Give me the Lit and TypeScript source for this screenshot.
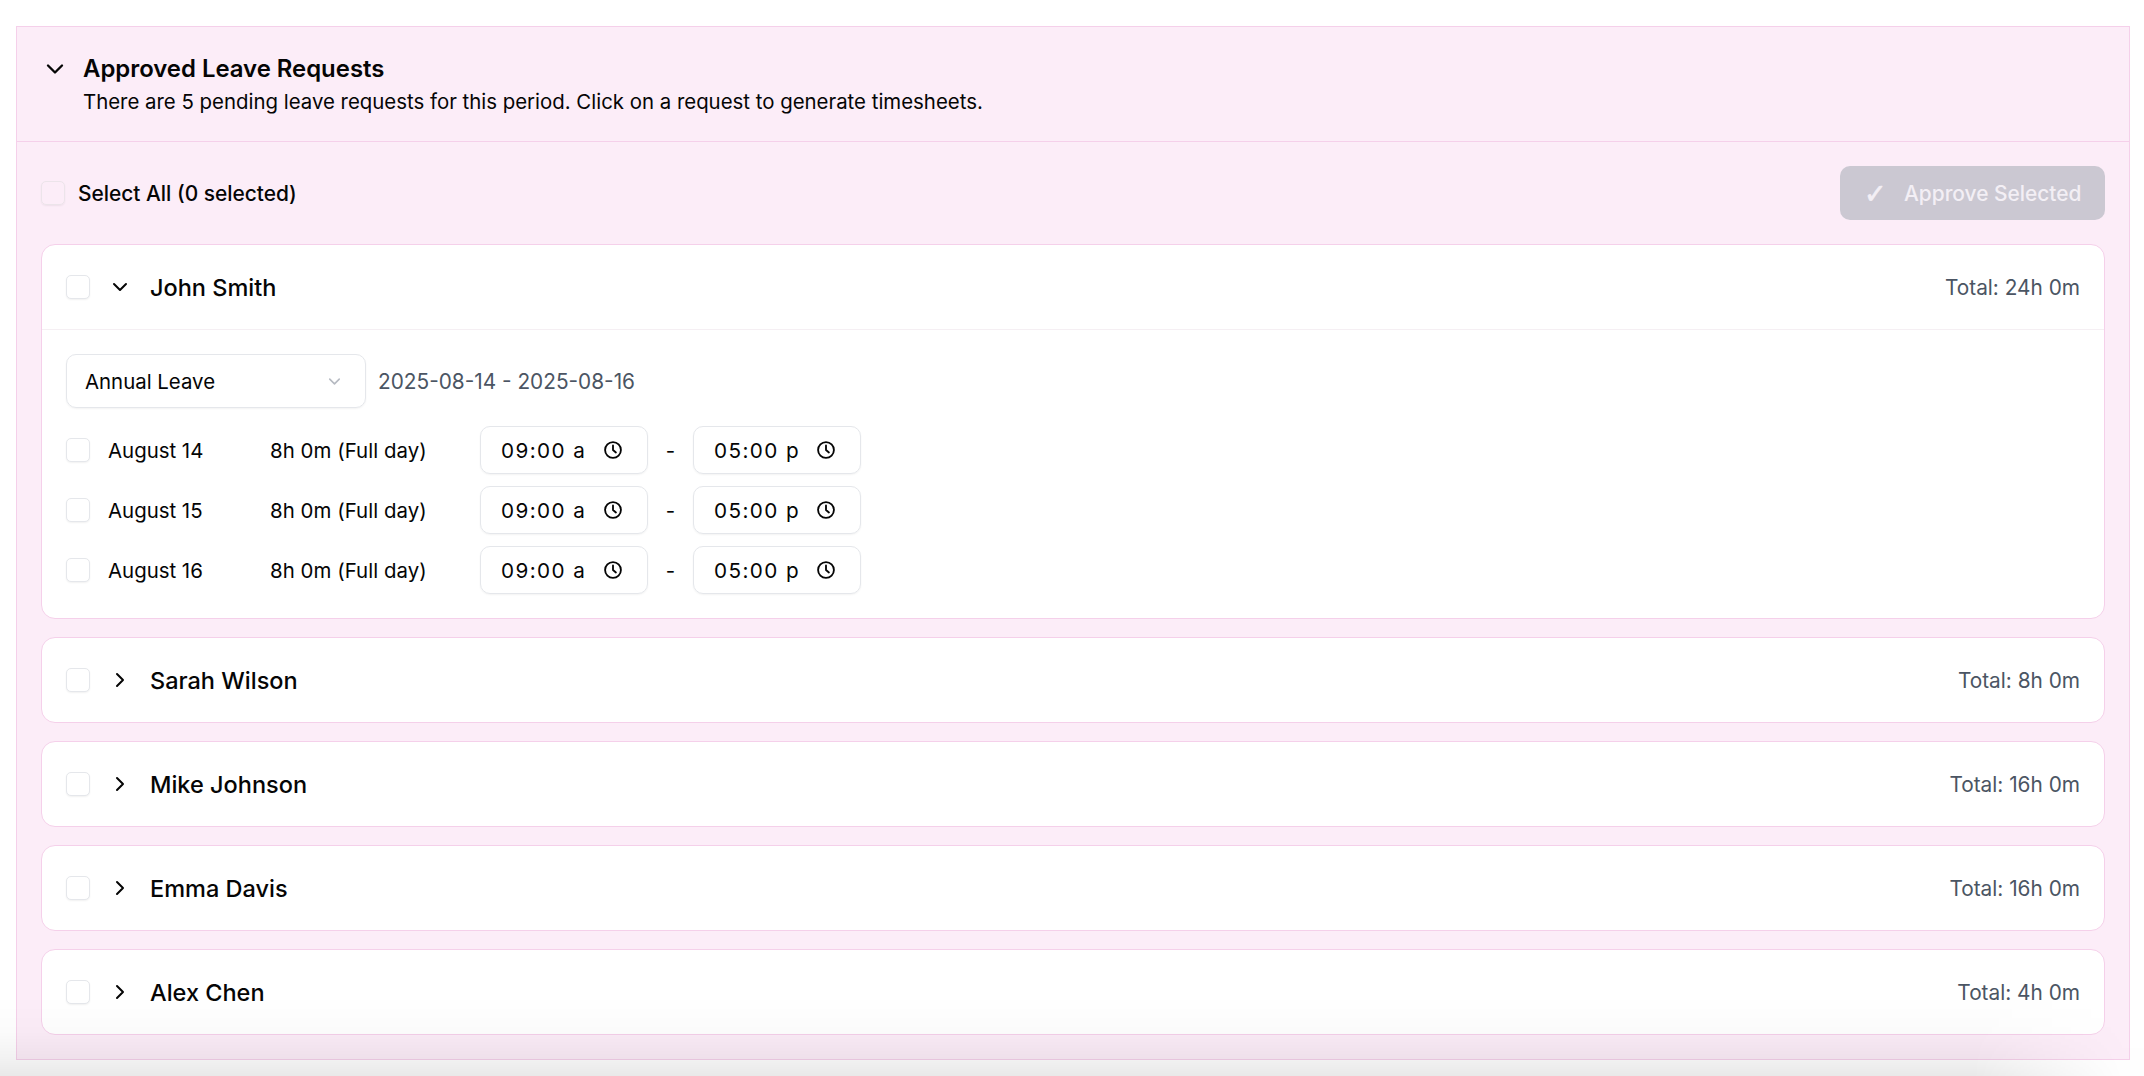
import { LitElement, html, css, svg } from "lit";
import { customElement } from "lit/decorators.js";

const chevronDown = (cls: string) => html`<svg class=${cls} viewBox="0 0 24 24" fill="none" stroke="currentColor" stroke-width="2" stroke-linecap="round" stroke-linejoin="round"><path d="m6 9 6 6 6-6"></path></svg>`;
const chevronRight = (cls: string) => html`<svg class=${cls} viewBox="0 0 24 24" fill="none" stroke="currentColor" stroke-width="2" stroke-linecap="round" stroke-linejoin="round"><path d="m9 18 6-6-6-6"></path></svg>`;
const clock = html`<svg class="clock" viewBox="0 0 24 24" fill="none" stroke="currentColor" stroke-width="2.2" stroke-linecap="round" stroke-linejoin="round">${svg`<circle cx="12" cy="12" r="9.5"></circle><path d="M12 6.5V12l3.5 3"></path>`}</svg>`;

const others = [
  { name: "Sarah Wilson", total: "8h 0m" },
  { name: "Mike Johnson", total: "16h 0m" },
  { name: "Emma Davis", total: "16h 0m" },
  { name: "Alex Chen", total: "4h 0m" },
];
const days = ["August 14", "August 15", "August 16"];

@customElement("app-root")
export class AppRoot extends LitElement {
  static styles = css`
    :host {
      display: block;
      position: relative;
      height: 1076px;
      overflow: hidden;
      background: #fff;
      font-family: Inter, "Liberation Sans", sans-serif;
      color: #050505;
      padding: 26px 14px 0 16px;
      box-sizing: border-box;
    }
    .panel {
      border: 1px solid #f5d0ea;
      background: #fcedf8;
      height: 1034px;
      box-sizing: border-box;
    }
    .head {
      display: flex;
      gap: 14px;
      height: 115px;
      box-sizing: border-box;
      padding: 28px 24px 0;
      border-bottom: 1px solid #f5d0ea;
    }
    .head-chev { width: 28px; height: 28px; flex: none; }
    h2 { margin: 0; font-size: 23.9px; line-height: 28px; font-weight: 600; }
    .head p { margin: 6px 0 0; font-size: 20.4px; line-height: 26px; }
    .body { padding: 24px 24px 0; display: flex; flex-direction: column; }
    .toolbar {
      display: flex;
      align-items: center;
      justify-content: space-between;
      height: 54px;
      margin-bottom: 24px;
    }
    .sel-all { display: flex; align-items: center; gap: 13px; font-size: 20.9px; font-weight: 500; }
    .cb {
      display: block;
      width: 24px;
      height: 24px;
      box-sizing: border-box;
      border: 1px solid #e5e7eb;
      border-radius: 5px;
      background: #fff;
      box-shadow: 0 1px 2px rgba(0, 0, 0, 0.06);
      flex: none;
    }
    .sel-all .cb { background: transparent; border-color: #ece4ea; }
    .btn {
      display: flex;
      align-items: center;
      width: 265px;
      height: 54px;
      box-sizing: border-box;
      padding-left: 24px;
      gap: 18px;
      border-radius: 10px;
      background: #cbc8d2;
      color: #f3eff5;
      font-size: 20.9px;
      font-weight: 500;
    }
    .tick {
      font-family: "DejaVu Sans", sans-serif;
      font-size: 27px;
      line-height: 1;
      width: 22px;
      -webkit-text-stroke: 0.7px #f3eff5;
    }
    .card {
      background: #fff;
      border: 1px solid #f5d0ea;
      border-radius: 14px;
      margin-bottom: 18px;
    }
    .row-head {
      display: flex;
      align-items: center;
      height: 84px;
      padding: 0 24px;
    }
    .row-chev { width: 24px; height: 24px; margin-left: 18px; flex: none; }
    .name { font-size: 23.5px; font-weight: 500; margin-left: 18px; flex: 1; }
    .total { font-size: 20.8px; color: #4b5563; }
    .open .row-head { border-bottom: 1px solid #f5eff3; }
    .detail { padding: 24px 24px 24px; box-sizing: border-box; }
    .top { display: flex; align-items: center; gap: 12px; margin-bottom: 18px; }
    .select {
      width: 300px;
      height: 54px;
      box-sizing: border-box;
      display: flex;
      align-items: center;
      justify-content: space-between;
      padding: 0 21px 0 18px;
      border: 1px solid #e5e7eb;
      border-radius: 10px;
      box-shadow: 0 1px 2px rgba(0, 0, 0, 0.05);
      font-size: 20.4px;
    }
    .sel-chev { width: 19px; height: 19px; color: #b6bac2; }
    .date { font-size: 20.8px; color: #4b5563; }
    .day { display: flex; align-items: center; height: 48px; margin-bottom: 12px; font-size: 20.4px; }
    .day:last-child { margin-bottom: 0; }
    .day-name { width: 162px; margin-left: 18px; }
    .day-hours { width: 210px; letter-spacing: 0.05px; }
    .time {
      width: 168px;
      height: 48px;
      box-sizing: border-box;
      display: flex;
      align-items: center;
      justify-content: space-between;
      padding: 0 24px 0 20px;
      border: 1px solid #e5e7eb;
      border-radius: 10px;
      box-shadow: 0 1px 2px rgba(0, 0, 0, 0.05);
      font-size: 20.7px;
      letter-spacing: 1.4px;
      white-space: pre;
    }
    .clock { width: 20px; height: 20px; flex: none; }
    .dash { width: 45px; text-align: center; }
    .fade {
      position: absolute;
      left: 0;
      right: 0;
      bottom: 0;
      height: 80px;
      pointer-events: none;
      background: linear-gradient(to bottom, rgba(0, 0, 0, 0) 0%, rgba(0, 0, 0, 0.015) 45%, rgba(0, 0, 0, 0.05) 78%, rgba(0, 0, 0, 0.085) 100%);
      -webkit-mask-image: linear-gradient(to right, #000 0%, #000 92%, rgba(0, 0, 0, 0.05) 99%);
      mask-image: linear-gradient(to right, #000 0%, #000 92%, rgba(0, 0, 0, 0.05) 99%);
    }
  `;

  render() {
    return html`
      <div class="panel">
        <div class="head">
          ${chevronDown("head-chev")}
          <div>
            <h2>Approved Leave Requests</h2>
            <p>There are 5 pending leave requests for this period. Click on a request to generate timesheets.</p>
          </div>
        </div>
        <div class="body">
          <div class="toolbar">
            <div class="sel-all"><span class="cb"></span>Select All (0 selected)</div>
            <div class="btn"><span class="tick">✓</span>Approve Selected</div>
          </div>
          <div class="card open">
            <div class="row-head">
              <span class="cb"></span>
              ${chevronDown("row-chev")}
              <span class="name">John Smith</span>
              <span class="total">Total: 24h 0m</span>
            </div>
            <div class="detail">
              <div class="top">
                <div class="select">Annual Leave ${chevronDown("sel-chev")}</div>
                <span class="date">2025-08-14 - 2025-08-16</span>
              </div>
              ${days.map(
                (d) => html`<div class="day">
                  <span class="cb"></span>
                  <span class="day-name">${d}</span>
                  <span class="day-hours">8h 0m (Full day)</span>
                  <div class="time"><span>09:00 a</span>${clock}</div>
                  <span class="dash">-</span>
                  <div class="time"><span>05:00 p</span>${clock}</div>
                </div>`
              )}
            </div>
          </div>
          ${others.map(
            (o) => html`<div class="card">
              <div class="row-head">
                <span class="cb"></span>
                ${chevronRight("row-chev")}
                <span class="name">${o.name}</span>
                <span class="total">Total: ${o.total}</span>
              </div>
            </div>`
          )}
        </div>
      </div>
      <div class="fade"></div>
    `;
  }
}
